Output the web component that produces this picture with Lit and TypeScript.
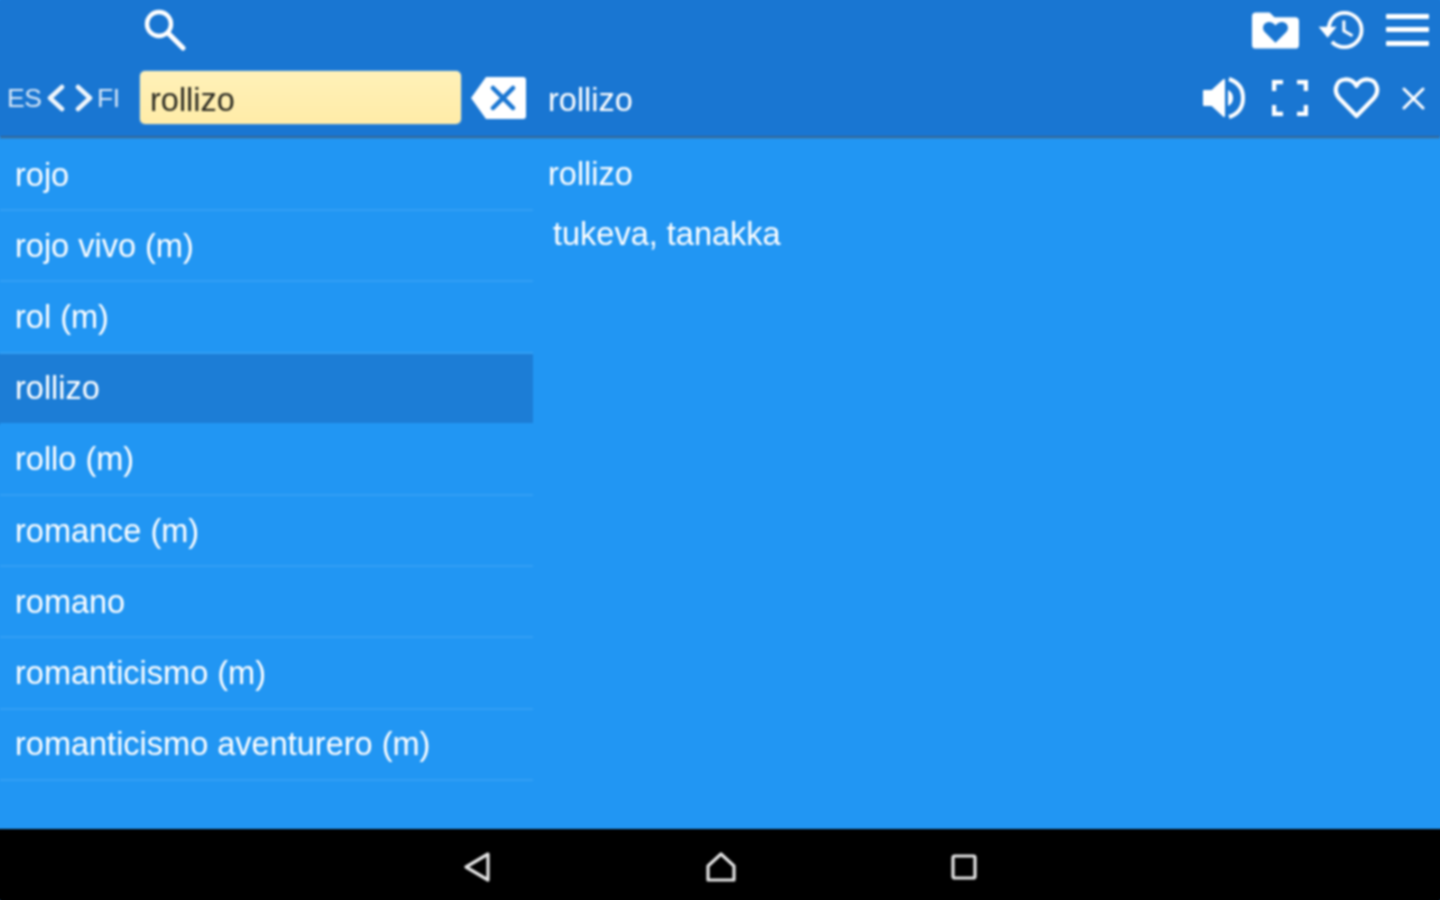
import { LitElement, html, css } from "lit";
import { customElement } from "lit/decorators.js";

const WORDS = ["rojo", "rojo vivo (m)", "rol (m)", "rollizo", "rollo (m)", "romance (m)", "romano", "romanticismo (m)", "romanticismo aventurero (m)"];

@customElement("app-root")
export class AppRoot extends LitElement {
  static styles = css`
    :host { display: block; width: 1440px; height: 900px; overflow: hidden; font-family: "Liberation Sans", Arial, sans-serif; color: #fff; background: #2196f3; }
    .page { display: flex; flex-direction: column; height: 900px; filter: blur(0.8px); }
    .header { height: 136px; background: #1976d2; display: flex; flex-direction: column; flex: none; box-shadow: 0 -8px 0 #1976d2, -8px 0 0 #1976d2, 8px 0 0 #1976d2; }
    .shadow { height: 3px; flex: none; background: linear-gradient(#2f5f8f, #3b6f9f 50%, #2196f3); }
    .top { height: 60px; display: flex; align-items: center; padding: 0 11px 0 142px; }
    .spacer { flex: 1; }
    svg { display: block; flex: none; }
    .folder { margin-right: 19px; }
    .hist { margin-right: 21px; }
    .bottom { height: 76px; display: flex; align-items: center; padding: 0 0 0 7px; box-sizing: border-box; }
    .lang { font-size: 26.500px; width: 35px; color: #d6e6f7; letter-spacing: -0.5px; }
    .lang.fi { width: 23px; margin-right: 20px; }
    .chev-l { margin: 0 10px 0 5px; }
    .chev-r { margin-right: 4px; }
    .input { width: 321px; height: 53px; margin-bottom: 2px; box-sizing: border-box; border-radius: 5px; background: linear-gradient(#fff1b8, #ffeca8); color: #2b2b22; font-size: 32.500px; display: flex; align-items: center; padding: 7px 0 0 10px; box-shadow: 0 0 2px rgba(255,255,255,.5); }
    .clear { margin: 0 22px 0 10px; }
    .word { font-size: 32.500px; flex: 1; padding-top: 5px; }
    .sound { margin-right: 27px; }
    .full { margin-right: 25px; }
    .heart { margin-right: 22px; }
    .close { margin-right: 15px; }
    .main { flex: 1; display: flex; min-height: 0; background: #2196f3; box-shadow: -8px 0 0 #2196f3, 8px 0 0 #2196f3; }
    .list { width: 533px; flex: none; padding-top: 1px; }
    .row { height: 71.200px; box-sizing: border-box; font-size: 32.500px; padding: 1.500px 0 0.500px 15px; display: flex; align-items: center; border-bottom: 2px solid #329ff4; box-shadow: -8px 0 0 #2196f3; }
    .row.sel { background: #1c7dd6; border-bottom-color: #2196f3; box-shadow: -8px 0 0 #1c7dd6; }
    .detail { padding: 17px 0 0 15px; font-size: 32.500px; }
    .term { height: 37px; line-height: 37px; }
    .def { margin: 23px 0 0 5px; height: 37px; line-height: 37px; }
    .nav { height: 71px; background: #000; flex: none; display: flex; align-items: center; justify-content: center; gap: 215.500px; padding: 5px 0 0 1px; box-sizing: border-box; box-shadow: 0 8px 0 #000, -8px 0 0 #000, 8px 0 0 #000; }
    .nav svg { fill: none; stroke: #e4e4e4; stroke-width: 3.200; stroke-linejoin: round; }
  `;

  render() {
    return html`<div class="page">
      <div class="header">
        <div class="top">
          <svg width="44" height="44" viewBox="0 0 44 44" fill="none" stroke="#fff"><circle cx="17" cy="16" r="12" stroke-width="4.400"/><path d="M26 25l15 15" stroke-width="5" stroke-linecap="round"/></svg>
          <div class="spacer"></div>
          <svg class="folder" width="47" height="38" viewBox="0 0 48 38"><path fill="#fff" fill-rule="evenodd" d="M4 1h14l5 5h21a4 4 0 0 1 4 4v24a4 4 0 0 1-4 4H4a4 4 0 0 1-4-4V5a4 4 0 0 1 4-4z"/><path fill="#1976d2" d="M24 32L13 21c-3-3-2-9 3-10 3-.6 6 .6 8 3.500 2-2.900 5-4.100 8-3.500 5 1 6 7 3 10z"/></svg>
          <svg class="hist" width="47" height="42" viewBox="0 0 48 44" fill="none" stroke="#fff"><path d="M10.500 21C11 11 18 4 27 4c10 0 18 8 18 18s-8 18-18 18c-6 0-10-2.500-13-5.500" stroke-width="4"/><path d="M0 18.500h19L9.500 30z" fill="#fff" stroke="none"/><path d="M26.500 12v11l9 5" stroke-width="3.200"/></svg>
          <svg width="43" height="32" viewBox="0 0 43 32" fill="#fff"><rect y="0" width="43" height="5" rx="1"/><rect y="13" width="43" height="5" rx="1"/><rect y="27" width="43" height="5" rx="1"/></svg>
        </div>
        <div class="bottom">
          <div class="lang">ES</div>
          <svg class="chev-l" width="18" height="28" viewBox="0 0 18 28" fill="none" stroke="#f0f6fc" stroke-width="4.500" stroke-linecap="round" stroke-linejoin="round"><path d="M15 3L3 14l12 11"/></svg>
          <svg class="chev-r" width="18" height="28" viewBox="0 0 18 28" fill="none" stroke="#f0f6fc" stroke-width="4.500" stroke-linecap="round" stroke-linejoin="round"><path d="M3 3l12 11L3 25"/></svg>
          <div class="lang fi">FI</div>
          <div class="input">rollizo</div>
          <svg class="clear" width="55" height="42" viewBox="0 0 55 42"><path fill="#fff" d="M15 0h37a3 3 0 0 1 3 3v36a3 3 0 0 1-3 3H15L0 21z"/><path d="M22 11l20 20M42 11L22 31" stroke="#1976d2" stroke-width="4.500" stroke-linecap="round"/></svg>
          <div class="word">rollizo</div>
          <svg class="sound" width="42" height="42" viewBox="0 0 42 42"><path fill="#fff" stroke="#fff" stroke-width="2" stroke-linejoin="round" d="M1 14h8L21 3v36L9 28H1z"/><path d="M25 13c4 2 5 5 5 8s-1 6-5 8z" fill="#fff"/><path d="M26 2c9 3 14 10 14 19s-5 16-14 19" fill="none" stroke="#fff" stroke-width="4"/></svg>
          <svg class="full" width="36" height="36" viewBox="0 0 36 36" fill="none" stroke="#fff" stroke-width="4.500"><path d="M2 11V2h9M25 2h9v9M34 25v9h-9M11 34H2v-9"/></svg>
          <svg class="heart" width="47" height="42" viewBox="0 0 47 42" fill="none" stroke="#fff" stroke-width="4.200" stroke-linejoin="round"><path d="M23.500 39L6 21C0 14 3 3 12 2.500c5-.3 9 2 11.500 6.500C26 4.500 30 2.200 35 2.500 44 3 47 14 41 21z"/></svg>
          <svg class="close" width="23" height="23" viewBox="0 0 23 23" stroke="#fff" stroke-width="3" stroke-linecap="round"><path d="M2 2l19 19M21 2L2 21"/></svg>
        </div>
      </div>
      <div class="shadow"></div>
      <div class="main">
        <div class="list">
          ${WORDS.map((w) => html`<div class="row ${w === "rollizo" ? "sel" : ""}">${w}</div>`)}
        </div>
        <div class="detail">
          <div class="term">rollizo</div>
          <div class="def">tukeva, tanakka</div>
        </div>
      </div>
      <div class="nav">
        <svg width="26" height="30" viewBox="0 0 26 30"><path d="M24 2L2 15l22 13z"/></svg>
        <svg width="30" height="30" viewBox="0 0 30 30"><path d="M15 2L2 14v14h26V14z"/></svg>
        <svg width="26" height="26" viewBox="0 0 26 26"><rect x="2" y="2" width="22" height="22" rx="1.500"/></svg>
      </div>
    </div>`;
  }
}
